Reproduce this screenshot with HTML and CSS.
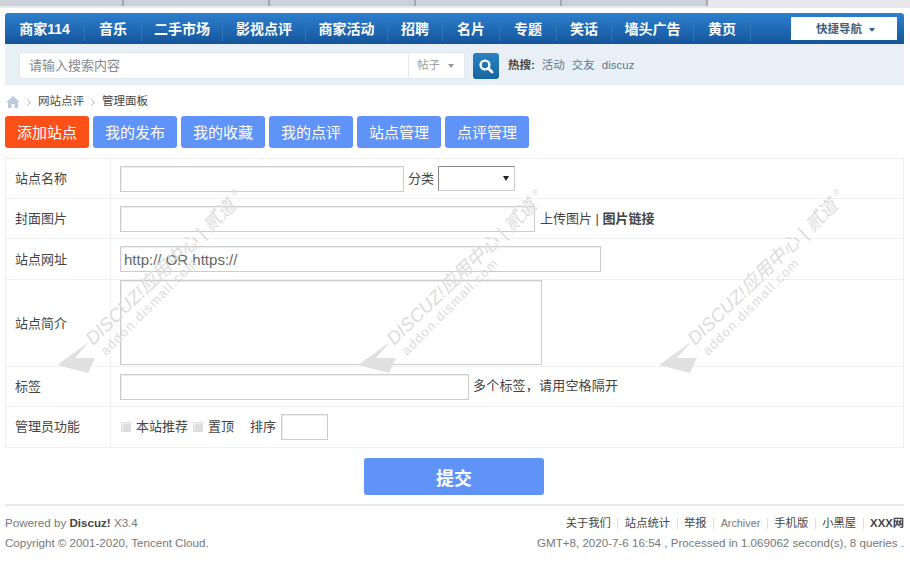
FILE: index.html
```html
<!DOCTYPE html>
<html lang="zh-CN">
<head>
<meta charset="utf-8">
<title>网站点评 - 管理面板</title>
<link rel="stylesheet" href="styles.css">
</head>
<body>
<div class="strip">
  <span class="strip-tab t1"></span><span class="strip-tab t2"></span><span class="strip-tab t2"></span><span class="strip-tab t2"></span><span class="strip-tab t2"></span><span class="strip-end"></span>
</div>
<div class="page">
  <header class="head">
    <nav class="nav">
      <ul class="nav-list">
        <li class="nav-item n80"><a>商家114</a></li>
        <li class="nav-item n57"><a>音乐</a></li>
        <li class="nav-item n81"><a>二手市场</a></li>
        <li class="nav-item n83"><a>影视点评</a></li>
        <li class="nav-item n82"><a>商家活动</a></li>
        <li class="nav-item n55"><a>招聘</a></li>
        <li class="nav-item n57"><a>名片</a></li>
        <li class="nav-item n57"><a>专题</a></li>
        <li class="nav-item n55"><a>笑话</a></li>
        <li class="nav-item n82"><a>墙头广告</a></li>
        <li class="nav-item n57"><a>黄页</a></li>
      </ul>
      <a class="quick">快捷导航<i class="caret caret-dark"></i></a>
    </nav>
    <div class="search">
      <div class="search-box">
        <span class="search-input">请输入搜索内容</span>
        <span class="search-type">帖子<i class="caret caret-grey"></i></span>
      </div>
      <button class="search-btn" type="button" aria-label="搜索">
        <svg width="16" height="16" viewBox="0 0 16 16"><circle cx="7" cy="7" r="4.4" fill="none" stroke="#fff" stroke-width="2.4"/><path d="M10.2 10.2 14 14" stroke="#fff" stroke-width="2.8" stroke-linecap="round"/></svg>
      </button>
      <div class="hot"><strong>热搜:</strong><a>活动</a><a>交友</a><a>discuz</a></div>
    </div>
  </header>

  <div class="crumb">
    <svg class="home" width="14" height="12" viewBox="0 0 14 12"><path d="M7 0 0 6.2h2V12h3.6V8h2.8v4H12V6.2h2z" fill="#b9cbdc"/></svg>
    <span class="sep"></span><a>网站点评</a><span class="sep"></span><a>管理面板</a>
  </div>

  <div class="tabs">
    <a class="tab tab-add">添加站点</a>
    <a class="tab">我的发布</a>
    <a class="tab">我的收藏</a>
    <a class="tab">我的点评</a>
    <a class="tab">站点管理</a>
    <a class="tab">点评管理</a>
  </div>

  <form class="form">
    <div class="row">
      <div class="label">站点名称</div>
      <div class="field">
        <input class="ipt w284" type="text"><span class="note">分类</span><span class="select"><i class="select-arrow"></i></span>
      </div>
    </div>
    <div class="row">
      <div class="label">封面图片</div>
      <div class="field">
        <input class="ipt w415" type="text"><span class="note up">上传图片 | <b>图片链接</b></span>
      </div>
    </div>
    <div class="row row-url">
      <div class="label">站点网址</div>
      <div class="field"><input class="ipt w481 url" type="text" value="http:// OR https://"></div>
    </div>
    <div class="row row-area">
      <div class="label">站点简介</div>
      <div class="field"><textarea class="area"></textarea></div>
    </div>
    <div class="row">
      <div class="label">标签</div>
      <div class="field"><input class="ipt w349" type="text"><span class="note tags">多个标签，请用空格隔开</span></div>
    </div>
    <div class="row row-last">
      <div class="label">管理员功能</div>
      <div class="field">
        <span class="check"></span><span class="opt">本站推荐</span><span class="check"></span><span class="opt">置顶</span><span class="opt order">排序</span><input class="ipt w47" type="text">
      </div>
    </div>
  </form>

  <div class="submit-row"><button class="submit" type="button">提交</button></div>

  <footer class="foot">
    <div class="foot-left">
      <p>Powered by <b>Discuz!</b> X3.4</p>
      <p>Copyright © 2001-2020, Tencent Cloud.</p>
    </div>
    <div class="foot-right">
      <p class="foot-links"><a>关于我们</a><i></i><a>站点统计</a><i></i><a>举报</a><i></i><a class="muted">Archiver</a><i></i><a>手机版</a><i></i><a>小黑屋</a><i></i><a><b>XXX网</b></a></p>
      <p>GMT+8, 2020-7-6 16:54 , Processed in 1.069062 second(s), 8 queries .</p>
    </div>
  </footer>
</div>

<div class="marks" aria-hidden="true">
  <svg class="mark" width="200" height="195" viewBox="0 0 200 195"><path d="M7 180 39 157 25 173H45L38 188z" fill="#e0e0e0"/><text class="mark-a" transform="translate(43 161) rotate(-44)">DISCUZ!应用中心 | 贰道</text><text class="mark-b" transform="translate(56 171) rotate(-45)">addon.dismall.com</text><text class="mark-r" transform="translate(181 11)">®</text></svg>
  <svg class="mark" width="200" height="195" viewBox="0 0 200 195"><path d="M7 180 39 157 25 173H45L38 188z" fill="#e0e0e0"/><text class="mark-a" transform="translate(43 161) rotate(-44)">DISCUZ!应用中心 | 贰道</text><text class="mark-b" transform="translate(56 171) rotate(-45)">addon.dismall.com</text><text class="mark-r" transform="translate(181 11)">®</text></svg>
  <svg class="mark" width="200" height="195" viewBox="0 0 200 195"><path d="M7 180 39 157 25 173H45L38 188z" fill="#e0e0e0"/><text class="mark-a" transform="translate(43 161) rotate(-44)">DISCUZ!应用中心 | 贰道</text><text class="mark-b" transform="translate(56 171) rotate(-45)">addon.dismall.com</text><text class="mark-r" transform="translate(181 11)">®</text></svg>
</div>
</body>
</html>
```

FILE: styles.css
```css
* { box-sizing: border-box; }
html, body { margin: 0; padding: 0; }
body {
  position: relative;
  width: 910px;
  height: 574px;
  overflow: hidden;
  background: #fff;
  color: #444;
  font: 13px/1.5 "Liberation Sans", "Noto Sans CJK SC", sans-serif;
}
p { margin: 0; }
ul { margin: 0; padding: 0; list-style: none; }
a { color: inherit; text-decoration: none; }

.strip {
  display: flex;
  height: 8px;
  background: #cdd0d9;
  border-bottom: 2px solid #e8e9ed;
}
.strip-tab { height: 6px; border-right: 2px solid #a6a8ae; }
.t1 { width: 124px; }
.t2 { width: 146px; }
.strip-end { flex: 1; height: 6px; background: #e6e7ea; }

.page { padding: 5px 6px 0 5px; }

.nav {
  display: flex;
  justify-content: space-between;
  align-items: center;
  height: 31px;
  padding-right: 7px;
  border-radius: 3px 3px 0 0;
  background: linear-gradient(#2e7fce, #14559a);
}
.nav-list { display: flex; align-items: center; }
.nav-item {
  height: 24px;
  border-right: 1px solid #2f73b8;
  color: #fff;
  font-size: 14px;
  font-weight: bold;
  line-height: 24px;
  text-align: center;
  white-space: nowrap;
}
.n80 { width: 80px; }
.n55 { width: 55px; }
.n57 { width: 57px; }
.n81 { width: 81px; }
.n82 { width: 82px; }
.n83 { width: 83px; }
.quick {
  display: flex;
  align-items: center;
  width: 106px;
  height: 23px;
  padding: 2px 0 0 25px;
  background: #fff;
  color: #3f5f80;
  font-size: 11.5px;
  font-weight: bold;
}
.caret {
  display: inline-block;
  width: 0;
  height: 0;
  border-style: solid;
  border-width: 4px 3.5px 0;
}
.caret-dark { margin-left: 7px; border-color: #2e5d8f transparent transparent; }
.caret-grey { margin-left: 8px; border-color: #999 transparent transparent; }

.search {
  display: flex;
  align-items: center;
  height: 41px;
  padding: 2px 0 0 14px;
  background: #e8eff6;
}
.search-box {
  display: flex;
  width: 446px;
  height: 27px;
  background: #fff;
  border: 1px solid #e2e8ef;
  border-radius: 2px;
}
.search-input {
  flex: 1;
  padding-left: 9px;
  color: #888;
  font-size: 13px;
  line-height: 25px;
}
.search-type {
  display: flex;
  align-items: center;
  width: 56px;
  padding-left: 8px;
  border-left: 1px solid #e8e8e8;
  color: #999;
  font-size: 11.5px;
}
.search-btn {
  display: flex;
  align-items: center;
  justify-content: center;
  width: 26px;
  height: 26px;
  margin-left: 8px;
  padding: 0;
  border: 0;
  border-radius: 3px;
  background: linear-gradient(#2a82c2, #17659f);
}
.hot { display: flex; gap: 7px; margin-left: 9px; color: #5d7a91; font-size: 11.5px; }
.hot strong { margin-right: 0; color: #444; }

.crumb {
  display: flex;
  align-items: center;
  height: 18px;
  margin-top: 8px;
  color: #444;
  font-size: 11.5px;
}
.home { margin-left: 1px; }
.sep {
  width: 5px;
  height: 5px;
  margin: 0 8px 0 5px;
  border-top: 1px solid #c4c4c4;
  border-right: 1px solid #c4c4c4;
  transform: rotate(45deg);
}

.tabs { display: flex; gap: 4px; margin-top: 5px; }
.tab {
  width: 84px;
  height: 32px;
  border-radius: 3px;
  background: #5f93f7;
  color: #fff;
  font-size: 15px;
  line-height: 33px;
  text-align: center;
}
.tab-add { background: #fb5118; }

.form {
  margin-top: 10px;
  border: 1px solid #efefef;
}
.row {
  display: flex;
  height: 40px;
  border-bottom: 1px solid #efefef;
}
.row-url { height: 41px; }
.row-area { height: 87px; }
.row-last { border-bottom: 0; }
.label {
  display: flex;
  align-items: center;
  width: 105px;
  padding-left: 9px;
  border-right: 1px solid #efefef;
}
.row-url .label, .row-area .label { padding-top: 2px; }
.field {
  display: flex;
  align-items: center;
  padding-left: 9px;
}
.ipt {
  height: 26px;
  padding: 0 3px;
  border: 1px solid #ccc;
  box-shadow: inset 1px 1px 1px #eee;
  background: transparent;
  color: #666;
  font: 14px "Liberation Sans", sans-serif;
  outline: 0;
}
.w284 { width: 284px; }
.w415 { width: 415px; }
.w481 { width: 481px; }
.w349 { width: 349px; }
.w47 { width: 47px; }
.url { font-size: 15px; }
.area {
  display: block;
  width: 422px;
  height: 85px;
  margin-bottom: 2px;
  border: 1px solid #ccc;
  box-shadow: inset 1px 1px 1px #eee;
  background: transparent;
  resize: none;
}
.note { margin-left: 4px; white-space: nowrap; }
.note.up { margin-left: 5px; }
.note.tags { margin: -2px 0 0 4px; letter-spacing: .2px; }
.select {
  position: relative;
  width: 77px;
  height: 25px;
  margin-left: 4px;
  border: 1px solid #ccc;
  border-top-color: #888;
  border-left-color: #888;
}
.select-arrow {
  position: absolute;
  top: 9px;
  right: 5px;
  border-style: solid;
  border-width: 5px 3px 0;
  border-color: #222 transparent transparent;
}
.check {
  width: 10px;
  height: 10px;
  margin-left: 1px;
  border: 1px solid #ddd;
  background: #ddd;
  box-shadow: inset 1px 1px 1px #f3f3f3;
}
.opt { margin: 0 4px 0 5px; }
.order { margin: 0 5px 0 12px; }

.submit-row { display: flex; justify-content: center; margin-top: 10px; padding-right: 1px; }
.submit {
  width: 180px;
  height: 37px;
  padding: 0;
  border: 0;
  border-radius: 3px;
  background: #5f93f7;
  color: #fff;
  font: bold 18px "Liberation Sans", "Noto Sans CJK SC", sans-serif;
}

.foot {
  display: flex;
  justify-content: space-between;
  margin-top: 9px;
  padding-top: 7px;
  border-top: 2px solid #e8e8e8;
  color: #777;
  font-size: 11.6px;
  line-height: 20px;
}
.foot b { color: #444; }
.foot-right { text-align: right; }
.foot-links { display: flex; justify-content: flex-end; align-items: center; color: #444; font-size: 11.3px; }
.foot-links i { width: 1px; height: 11px; margin: 0 6.5px; background: #ddd; }
.muted { color: #777; font-size: 10.8px; }

.marks {
  position: absolute;
  top: 185px;
  left: 50px;
  display: flex;
  gap: 101px;
  pointer-events: none;
}
.mark { flex: none; }
.mark-a { fill: #dcdcdc; font: italic 18.5px "Liberation Sans", "Noto Sans CJK SC", sans-serif; }
.mark-b { fill: #dcdcdc; font: 13px "Liberation Sans", sans-serif; letter-spacing: 1.3px; }
.mark-r { fill: #dcdcdc; font: 9px "Liberation Sans", sans-serif; }
```
